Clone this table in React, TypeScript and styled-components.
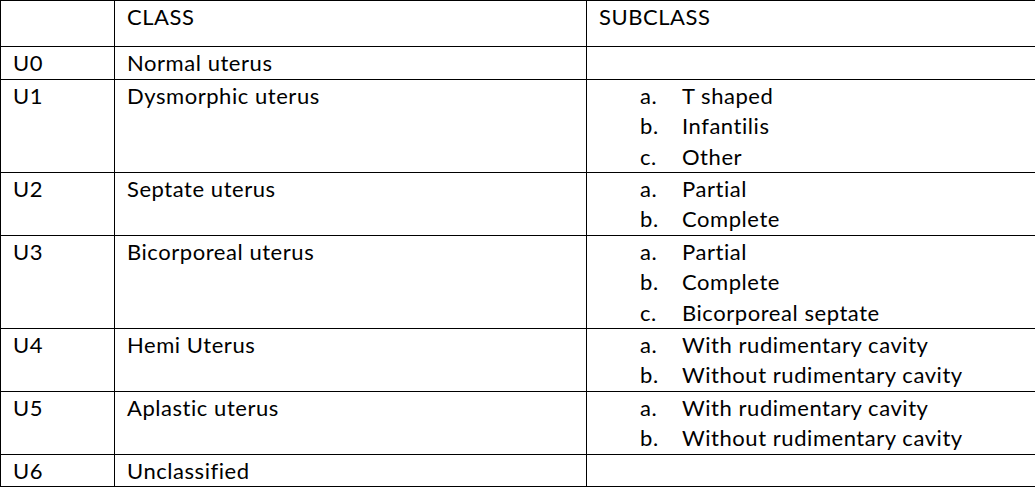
import React from "react";
import styled, { createGlobalStyle } from "styled-components";

const GlobalStyle = createGlobalStyle`
  html, body {
    margin: 0;
    padding: 0;
    background: #ffffff;
  }
  body {
    font-family: Lato, "Open Sans", "Liberation Sans", sans-serif;
    color: #000000;
  }
`;

const Table = styled.table`
  width: 1035px;
  border-collapse: collapse;
  table-layout: fixed;
  font-size: 22px;
  letter-spacing: 0.55px;
  line-height: 30.4px;
  font-variant-ligatures: none;
  color: #000;
`;

const Col = styled.col<{ $w: number }>`
  width: ${(p) => p.$w}px;
`;

const HeadCell = styled.th`
  border: 1px solid #000;
  padding: 1px 12px 14px;
  text-align: left;
  font-weight: 400;
  vertical-align: top;
`;

const Cell = styled.td`
  border: 1px solid #000;
  padding: 1px 12px 0;
  vertical-align: top;
  white-space: nowrap;
`;

const SubList = styled.ol`
  list-style: none;
  margin: 0;
  padding: 0 0 0 41px;
`;

const SubItem = styled.li`
  display: flex;
`;

const Marker = styled.span`
  width: 42px;
  flex: none;
`;

type Row = { code: string; cls: string; subs: string[] };

const rows: Row[] = [
  { code: "U0", cls: "Normal uterus", subs: [] },
  { code: "U1", cls: "Dysmorphic uterus", subs: ["T shaped", "Infantilis", "Other"] },
  { code: "U2", cls: "Septate uterus", subs: ["Partial", "Complete"] },
  { code: "U3", cls: "Bicorporeal uterus", subs: ["Partial", "Complete", "Bicorporeal septate"] },
  { code: "U4", cls: "Hemi Uterus", subs: ["With rudimentary cavity", "Without rudimentary cavity"] },
  { code: "U5", cls: "Aplastic uterus", subs: ["With rudimentary cavity", "Without rudimentary cavity"] },
  { code: "U6", cls: "Unclassified", subs: [] },
];

const letters = "abcdefghij";

export default function App() {
  return (
    <>
      <GlobalStyle />
      <Table>
        <colgroup>
          <Col $w={114} />
          <Col $w={472} />
          <Col $w={449} />
        </colgroup>
        <thead>
          <tr>
            <HeadCell></HeadCell>
            <HeadCell>CLASS</HeadCell>
            <HeadCell>SUBCLASS</HeadCell>
          </tr>
        </thead>
        <tbody>
          {rows.map((r) => (
            <tr key={r.code}>
              <Cell>{r.code}</Cell>
              <Cell>{r.cls}</Cell>
              <Cell>
                {r.subs.length > 0 ? (
                  <SubList>
                    {r.subs.map((s, i) => (
                      <SubItem key={s}>
                        <Marker>{letters[i]}.</Marker>
                        <span>{s}</span>
                      </SubItem>
                    ))}
                  </SubList>
                ) : (
                  "\u00a0"
                )}
              </Cell>
            </tr>
          ))}
        </tbody>
      </Table>
    </>
  );
}
